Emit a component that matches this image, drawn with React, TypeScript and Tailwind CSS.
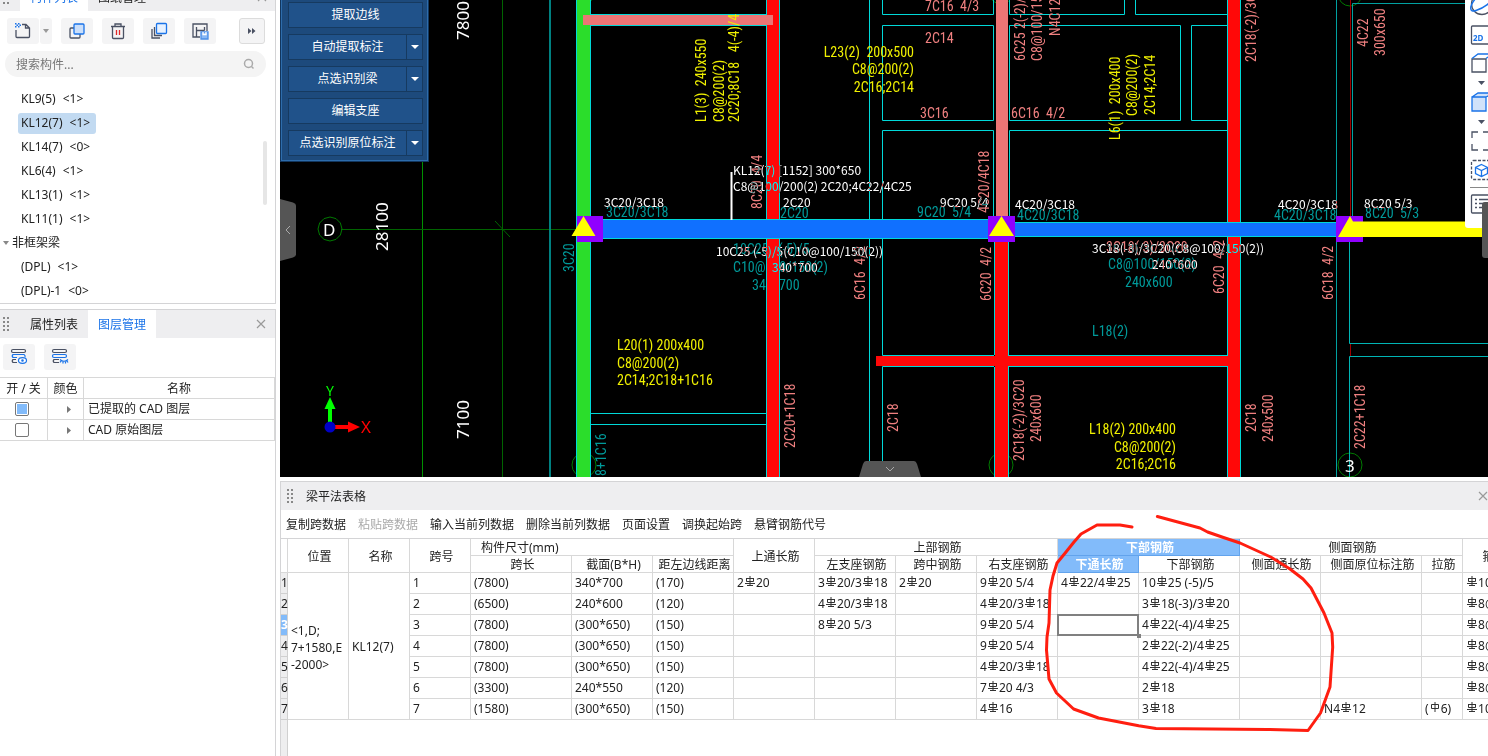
import { useState, type ReactNode } from "react"

type Note = [x: number, y: number, text: string, kind?: string];

const treeTop = ["KL9(5) <1>", "KL12(7) <1>", "KL14(7) <0>", "KL6(4) <1>", "KL13(1) <1>", "KL11(1) <1>"];
const treeBottom = ["(DPL) <1>", "(DPL)-1 <0>"];

const commands = [
  { name: "提取边线", menu: false },
  { name: "自动提取标注", menu: true },
  { name: "点选识别梁", menu: true },
  { name: "编辑支座", menu: false },
  { name: "点选识别原位标注", menu: true },
];

const tableTools = ["复制跨数据", "粘贴跨数据", "输入当前列数据", "删除当前列数据", "页面设置", "调换起始跨", "悬臂钢筋代号"];

// "#" is the HRB400 bar sign, "%" the plain bar sign
const spans = [
  ["1", "(7800)", "340*700", "(170)", "2#20", "3#20/3#18", "2#20", "9#20 5/4", "4#22/4#25", "10#25 (-5)/5", "", "", "", "#10@100/150"],
  ["2", "(6500)", "240*600", "(120)", "", "4#20/3#18", "", "4#20/3#18", "", "3#18(-3)/3#20", "", "", "", "#8@100/150"],
  ["3", "(7800)", "(300*650)", "(150)", "", "8#20 5/3", "", "9#20 5/4", "", "4#22(-4)/4#25", "", "", "", "#8@100/200"],
  ["4", "(7800)", "(300*650)", "(150)", "", "", "", "9#20 5/4", "", "2#22(-2)/4#25", "", "", "", "#8@100/200"],
  ["5", "(7800)", "(300*650)", "(150)", "", "", "", "4#20/3#18", "", "4#22(-4)/4#25", "", "", "", "#8@100/200"],
  ["6", "(3300)", "240*550", "(120)", "", "", "", "7#20 4/3", "", "2#18", "", "", "", "#8@100/200"],
  ["7", "(1580)", "(300*650)", "(150)", "", "", "", "4#16", "", "3#18", "", "N4#12", "(%6)", "#10@100/200"],
];

// x, baseline y, text, kind: "v" turned upright, "e" aligned to its end
const yellowNotes: Note[] = [
  [706, 122, "L1(3)  240x550", "v"],
  [724, 122, "C8@200(2)", "v"],
  [739, 122, "2C20;8C18   4(-4)/4", "v"],
  [914, 57, "L23(2)  200x500", "e"],
  [914, 74, "C8@200(2)", "e"],
  [914, 92, "2C16;2C14", "e"],
  [1120, 140, "L6(1)  200x400", "v"],
  [1137, 116, "C8@200(2)", "v"],
  [1155, 115, "2C14;2C14", "v"],
  [617, 350, "L20(1) 200x400"],
  [617, 368, "C8@200(2)"],
  [617, 385, "2C14;2C18+1C16"],
  [1176, 434, "L18(2) 200x400", "e"],
  [1176, 452, "C8@200(2)", "e"],
  [1176, 469, "2C16;2C16", "e"],
];

const salmonNotes: Note[] = [
  [925, 11, "7C16  4/3"],
  [925, 43, "2C14"],
  [920, 118, "3C16"],
  [1011, 118, "6C16  4/2"],
  [1025, 61, "6C25 2(-2)/4", "v"],
  [1042, 61, "C8@100/150(2)", "v"],
  [1060, 36, "N4C12", "v"],
  [1256, 62, "2C18(-2)/3C20", "v"],
  [1368, 47, "4C22", "v"],
  [1385, 56, "300x650", "v"],
  [762, 209, "8C20  4/4", "v"],
  [989, 213, "4C20/4C18", "v"],
  [1106, 252, "3C18(-3)/3C20"],
  [865, 300, "6C16  4/2", "v"],
  [991, 301, "6C20  4/2", "v"],
  [1224, 294, "6C20  4/2", "v"],
  [1333, 300, "6C18  4/2", "v"],
  [795, 448, "2C20+1C18", "v"],
  [898, 432, "2C18", "v"],
  [1024, 461, "2C18(-2)/3C20", "v"],
  [1041, 442, "240x600", "v"],
  [1256, 432, "2C18", "v"],
  [1273, 442, "240x500", "v"],
  [1365, 449, "2C22+1C18", "v"],
];

const tealNotes: Note[] = [
  [606, 217, "3C20/3C18"],
  [780, 218, "2C20"],
  [917, 217, "9C20  5/4"],
  [1017, 220, "4C20/3C18"],
  [1274, 220, "4C20/3C18"],
  [1365, 218, "8C20  5/3"],
  [733, 254, "10C25   (-5)/5"],
  [733, 272, "C10@100/150(2)"],
  [752, 290, "340x700"],
  [1108, 269, "C8@100/150(2)"],
  [1125, 287, "240x600"],
  [1092, 336, "L18(2)"],
  [574, 272, "3C20", "v"],
  [606, 476, "8+1C16", "v"],
];

const whiteNotes: Note[] = [
  [604, 207, "3C20/3C18"],
  [783, 207, "2C20"],
  [940, 207, "9C20 5/4"],
  [1015, 209, "4C20/3C18"],
  [1278, 209, "4C20/3C18"],
  [1364, 208, "8C20 5/3"],
  [733, 175, "KL12(7) [1152] 300*650"],
  [733, 191, "C8@100/200(2) 2C20;4C22/4C25"],
  [716, 256, "10C25 (-5)/5(C10@100/150(2))"],
  [772, 272, "340*700"],
  [1092, 253, "3C18(-3)/3C20(C8@100/150(2))"],
  [1152, 269, "240*600"],
];

function Notes({ items, className }: { items: Note[]; className: string }) {
  return (
    <g className={className}>
      {items.map(([x, y, text, kind], i) => (
        <text
          key={i}
          x={x}
          y={y}
          textAnchor={kind === "e" ? "end" : "start"}
          transform={kind === "v" ? `rotate(-90 ${x} ${y})` : undefined}
          className="whitespace-pre"
        >
          {text}
        </text>
      ))}
    </g>
  )
}

function Drawing() {
  return (
    <svg className="block h-full w-full" role="img" aria-label="梁平面图">
      <g transform="translate(-280 0)">
        {/* axis grid */}
        <g fill="none" stroke="#007a00">
          <path d="M422.5 0V477" stroke="#009000" />
          <path d="M502.5 0V477M341 229.5H576M495 221l15 16" stroke="#006400" />
          <path d="M342 229l-1.600 6-4.400 4.400-6 1.600-6-1.600-4.400-4.400-1.600-6 1.600-6 4.400-4.400 6-1.600 6 1.600 4.400 4.400z" />
          <circle cx="1350" cy="465" r="12" />
          <circle cx="584" cy="465" r="12" />
          <circle cx="1001" cy="465" r="12" />
          <circle cx="1350" cy="-6" r="12" />
          <circle cx="584" cy="-9" r="12" />
          <circle cx="1001" cy="-8" r="12" />
        </g>
        <path d="M550 0V477" stroke="#008080" strokeWidth="2" />

        <Notes items={tealNotes} className='fill-[#009a9a] font-["Liberation_Sans_Narrow","Roboto_Condensed","Liberation_Mono",monospace] text-[14px]' />

        {/* slab edges */}
        <path d="M1350.500 0V216M1350.500 344V356" stroke="#a00000" />
        <g fill="none" stroke="#00d8d8">
          <path d="M590 14.500H767M590 25.500H767M590.500 26V220M590.500 238V413.500H766.500M590.500 477V424.500H766.500" />
          <path d="M869.500 0V220M869.500 238V477M882.500 0V14.500H993.500V0M882.500 25.500H993.500V120.500H882.500zM882.500 220V130.500H993.500V220" />
          <path d="M1009.500 0V14.500H1124.500V0M1135.500 0V14.500H1228M1009.500 25.500H1180.500V120.500H1009.500zM1228 25.500H1191.500V120.500H1228M1009.500 223V130.500H1228" />
          <path d="M882.500 238V355.500H994M882.500 477V366.500H994M1008 355.500H1228M1008 366.500H1228" />
          <path d="M1336.500 0V477M1240.500 0V477M1352.500 216V3.500H1488" stroke="#00a0a0" />
          <path d="M1349.500 242V343.500H1488M1349.500 477V356.500H1488" stroke="#00b4b4" />
        </g>

        {/* beams */}
        <path d="M577 0h13v477h-13z" fill="#2bdd2b" />
        <path d="M576.500 0V477M590.500 0V477" stroke="#00d8d8" />
        <path d="M767 0h13v477h-13zM1228 0h12v477h-12zM995 242h13v235h-13zM876 356h352v10H876z" fill="#ff0808" />
        <path d="M766.500 0V477M779.500 0V477M1227.500 0V355M1227.500 367V477M1240.500 0V477M994.500 242V355M994.500 367V477M1008.500 242V355M1008.500 367V477" stroke="#00d8d8" />
        <path d="M583 15h190v10H583zM996 0h12v220h-12z" fill="#ec7575" />
        <path d="M583 220h418v18H583zM1001 223h349v13h-349z" fill="#1070ff" />
        <path d="M590 219.500H1001M590 238.500H1001M1001 222.500H1337M1001 236.500H1337" stroke="#00d8d8" />
        <path d="M577 216h26v26h-26zM988 216h27v26h-27zM1336 216h27v26h-27z" fill="#9000ff" />
        <path d="M583.500 216l12 20h-24zM1001.500 216l12.500 20h-25zM1350 216l3 5.500H1488V237H1338z" fill="#ff0" />

        <Notes items={salmonNotes} className='fill-[#f08080] font-["Liberation_Sans_Narrow","Roboto_Condensed","Liberation_Mono",monospace] text-[14px]' />
        <Notes items={yellowNotes} className='fill-[#f0f000] font-["Liberation_Sans_Narrow","Roboto_Condensed","Liberation_Mono",monospace] text-[14px]' />
        <path d="M731.500 172V220" stroke="#fff" strokeWidth="2" />
        <Notes items={whiteNotes} className='fill-white font-["Noto_Sans_CJK_SC",sans-serif] text-[12px] mix-blend-difference' />
        <Notes
          items={[
            [469, 40, "7800", "v"],
            [388, 251, "28100", "v"],
            [469, 439, "7100", "v"],
            [323, 236, "D"],
            [1345, 472, "3"],
          ]}
          className='fill-white font-["Noto_Sans",sans-serif] text-[17px]'
        />

        {/* ucs icon */}
        <path d="M330 427V408" stroke="#0f0" strokeWidth="4" />
        <path d="M330 397l5.500 12h-11z" fill="#0f0" />
        <path d="M330 427H349" stroke="#f00" strokeWidth="4" />
        <path d="M360 427l-12 5.500v-11z" fill="#f00" />
        <circle cx="330" cy="427" r="5.500" fill="#0000c8" />
        <text x="330" y="396" textAnchor="middle" className='fill-[#00ff00] font-["Noto_Sans",sans-serif] text-[14px]'>Y</text>
        <text x="366" y="433" textAnchor="middle" className='fill-[#ff0000] font-["Noto_Sans",sans-serif] text-[17px]'>X</text>
      </g>
    </svg>
  )
}

function Grip() {
  return (
    <svg className="shrink-0" width="8" height="16" fill="#888" aria-hidden="true">
      <path d="M1 1h2v2H1zM5 1h2v2H5zM1 5h2v2H1zM5 5h2v2H5zM1 9h2v2H1zM5 9h2v2H5zM1 13h2v2H1zM5 13h2v2H5z" />
    </svg>
  )
}

function Cross() {
  return (
    <svg width="10" height="10" fill="none" stroke="#999" strokeWidth="1.200" aria-hidden="true">
      <path d="M1 1l8 8M9 1l-8 8" />
    </svg>
  )
}

function Rebar({ plain }: { plain?: boolean }) {
  return (
    <svg className="mx-px inline-block align-[1px]" width="10" height="10" fill="none" stroke="#333" role="img" aria-label="钢筋">
      {plain ? <path d="M1.500 2.500h7v4h-7zM5 0v10" /> : <path d="M1.500 2v3.500h7V2M1 2.500h8M5 0v10M0 7.500h10M2 9.500h6" />}
    </svg>
  )
}

function BarText({ text }: { text: string }) {
  return (
    <>
      {text.split(/([#%])/).map((part, i) =>
        part === "#" ? <Rebar key={i} /> : part === "%" ? <Rebar key={i} plain /> : part
      )}
    </>
  )
}

function IconButton({ label, children }: { label: string; children: ReactNode }) {
  return (
    <button type="button" aria-label={label} className="flex h-[26px] w-8 items-center justify-center rounded-[3px] bg-[#f4f4f5]">
      {children}
    </button>
  )
}

function ComponentList() {
  const [selected, setSelected] = useState("KL12(7) <1>");
  const [keyword, setKeyword] = useState("");

  const row = (name: string) => (
    <li key={name} className="flex h-6 items-center pl-[18px]">
      <button
        type="button"
        onClick={() => setSelected(name)}
        className={`flex h-[21px] items-center gap-[7px] rounded-[3px] pr-[6px] pl-[3px] ${selected === name ? "bg-[#c2daf1]" : ""}`}
      >
        {name.split(" ").map((part) => <span key={part}>{part}</span>)}
      </button>
    </li>
  );

  return (
    <section className="border-r border-b border-[#d4d4d6]">
      <div className="flex h-[11px] items-end overflow-hidden bg-[#eeeef0]">
        <div className="flex h-7 flex-1 items-center">
          <div className="flex w-5 pl-0.5"><Grip /></div>
          <button type="button" className="h-7 w-[68px] bg-white pt-0.5 text-[#1a73e8]">构件列表</button>
          <button type="button" className="h-7 w-[68px] pt-0.5">图纸管理</button>
          <button type="button" aria-label="关闭" className="mr-2 ml-auto"><Cross /></button>
        </div>
      </div>

      <div className="mt-[7px] flex pr-[10px] pl-[7px]">
        <div className="mr-[9px] flex gap-px">
          <IconButton label="新建">
            <svg width="18" height="18" fill="none" stroke="#4a5163" strokeWidth="1.300" aria-hidden="true">
              <path d="M2 8v6.500q0 1 1 1h11.500q1 0 1-1V6l-3.500-3.500H8M11.500 2.500V6h4" />
              <path d="M1 1h1.500v1.500H1zM4 1h1.500v1.500H4zM2.500 2.500H4V4H2.500zM5.500 2.500H7V4H5.500zM1 4h1.500v1.500H1zM4 4h1.500v1.500H4z" fill="#1a73e8" stroke="none" />
            </svg>
          </IconButton>
          <button type="button" aria-label="新建选项" className="flex h-[26px] w-3 items-center justify-center rounded-[3px] bg-[#f4f4f5]">
            <svg width="6" height="4" fill="#999" aria-hidden="true"><path d="M0 0h6L3 4z" /></svg>
          </button>
        </div>
        <div className="flex gap-[9px]">
          <IconButton label="复制">
            <svg width="18" height="18" fill="none" stroke="#4a5163" strokeWidth="1.300" aria-hidden="true">
              <rect x="2" y="6" width="10" height="10" rx="1" />
              <rect x="6" y="2" width="10" height="10" rx="1" fill="#cbdffa" stroke="#1a73e8" />
            </svg>
          </IconButton>
          <IconButton label="删除">
            <svg width="18" height="18" fill="none" stroke="#4a5163" strokeWidth="1.300" aria-hidden="true">
              <path d="M2 4.500h14M6 4V2h6v2M3.500 5v10.500q0 1 1 1h9q1 0 1-1V5" />
              <path d="M7.500 8v5M10.500 8v5" stroke="#e02828" />
            </svg>
          </IconButton>
          <IconButton label="层间复制">
            <svg width="18" height="18" fill="none" stroke="#4a5163" strokeWidth="1.300" aria-hidden="true">
              <path d="M4.500 5v8.500H12M2 7v9h8" />
              <rect x="6.500" y="1.500" width="10" height="10" rx="1" fill="#e6f1ff" stroke="#1a73e8" />
            </svg>
          </IconButton>
          <IconButton label="存档">
            <svg width="18" height="18" fill="none" stroke="#4a5163" strokeWidth="1.300" aria-hidden="true">
              <path d="M16 9V2H2v13h7M5.500 5v10M5.500 8.500h8M13.500 5v3.500" />
              <path d="M10 10h7v7h-7z" stroke="#4a8fe8" fill="#8ab9f5" />
              <path d="M12 10v2.500h3V10" stroke="#fff" />
            </svg>
          </IconButton>
        </div>
        <button type="button" aria-label="更多" className="ml-auto flex h-[26px] w-[26px] items-center justify-center rounded-[3px] border border-[#dcdcdc] bg-[#f4f4f5]">
          <svg width="8" height="6" fill="#4a5163" aria-hidden="true"><path d="M0 0l3.500 3L0 6zM4 0l3.500 3L4 6z" /></svg>
        </button>
      </div>

      <label className="mt-[7px] mr-[9px] ml-[5px] flex h-[26px] items-center rounded-full bg-[#f4f4f4] pr-[11px] pl-[11px]">
        <input
          type="text"
          aria-label="搜索构件"
          value={keyword}
          onChange={(e) => setKeyword(e.target.value)}
          placeholder="搜索构件..."
          className="min-w-0 flex-1 pt-0.5 outline-none placeholder:text-[#777]"
        />
        <svg width="12" height="12" fill="none" stroke="#aaa" strokeWidth="1.500" aria-hidden="true">
          <circle cx="5.500" cy="5.500" r="4" />
          <path d="M8.500 8.500l2 2" />
        </svg>
      </label>

      <div className="relative mt-[10px]">
        <ul>
          {treeTop.map(row)}
          <li className="flex h-6 items-center gap-[3px] pl-[3px]">
            <svg width="6" height="4" fill="#888" aria-hidden="true"><path d="M0 0h6L3 4z" /></svg>
            非框架梁
          </li>
          {treeBottom.map(row)}
        </ul>
        <div className="absolute top-[54px] right-2 h-16 w-1 rounded bg-[#e6e6e6]" />
      </div>
    </section>
  )
}

function LayerPanel() {
  const [on, setOn] = useState([true, false]);

  return (
    <section className="mt-[5px] flex-1 border-t border-r border-[#d4d4d6]">
      <div className="flex h-7 items-center bg-[#eeeef0]">
        <div className="flex w-5 pl-0.5"><Grip /></div>
        <button type="button" className="h-7 w-[68px] pt-0.5">属性列表</button>
        <button type="button" className="h-7 w-[68px] bg-white pt-0.5 text-[#1a73e8]">图层管理</button>
        <button type="button" aria-label="关闭" className="mr-[9px] ml-auto"><Cross /></button>
      </div>
      <div className="flex gap-[9px] py-[6px] pl-[3px]">
        <IconButton label="显示图层">
          <svg width="18" height="18" fill="none" stroke="#4a5163" strokeWidth="1.200" aria-hidden="true">
            <rect x="1.500" y="1.500" width="14" height="3" rx="1.500" />
            <path d="M7 14.500H3q-1.500-1.500 0-3h3" />
            <path d="M7 9.500H3q-1.500-1.500 0-3h11q1.500 1 1 2.500" stroke="#1a73e8" />
            <ellipse cx="12.500" cy="12.500" rx="4" ry="2.800" stroke="#1a73e8" fill="#fff" />
            <circle cx="12.500" cy="12.500" r="0.700" stroke="#1a73e8" />
          </svg>
        </IconButton>
        <IconButton label="隐藏图层">
          <svg width="18" height="18" fill="none" stroke="#4a5163" strokeWidth="1.200" aria-hidden="true">
            <rect x="1.500" y="1.500" width="14" height="3" rx="1.500" />
            <path d="M8 14.500H3q-1.500-1.500 0-3h5" />
            <rect x="1.500" y="6.500" width="14" height="3" rx="1.500" stroke="#1a73e8" />
            <path d="M9 11.500q4 3.500 8 0M10 13l-1 1.500M12 13.500V15.500M14.500 13.500V15.500M16 13l1 1.500" stroke="#1a73e8" />
          </svg>
        </IconButton>
      </div>
      <table className="mt-px w-full table-fixed border-separate border-spacing-0 border-t border-[#d8d8d8]">
        <colgroup>
          <col className="w-12" />
          <col className="w-9" />
          <col />
        </colgroup>
        <thead>
          <tr className="*:h-[21px] *:border-r *:border-b *:border-[#d8d8d8] *:px-0 *:pt-0.5 *:pb-0 *:font-normal">
            <th>开 / 关</th>
            <th>颜色</th>
            <th>名称</th>
          </tr>
        </thead>
        <tbody>
          {["已提取的 CAD 图层", "CAD 原始图层"].map((name, i) => (
            <tr key={name} className="*:h-[21px] *:border-r *:border-b *:border-[#d8d8d8] *:p-0">
              <td>
                <input
                  type="checkbox"
                  aria-label={name}
                  checked={on[i]}
                  onChange={() => setOn(on.map((v, k) => (k === i ? !v : v)))}
                  className="ml-[15px] block size-[14px] appearance-none rounded-[2px] border border-[#777] bg-clip-content p-px checked:bg-[#82bbfa]"
                />
              </td>
              <td>
                <svg className="ml-[19px]" width="5" height="7" fill="#777" aria-hidden="true"><path d="M0 0l4 3.500L0 7z" /></svg>
              </td>
              <td><span className="pl-1">{name}</span></td>
            </tr>
          ))}
        </tbody>
      </table>
    </section>
  )
}

function CommandPanel() {
  return (
    <div className="absolute top-0 left-0 w-[149px] border border-t-0 border-[#12365e] bg-[#1d4a7c]">
      <div className="flex flex-col gap-[6px] border border-t-0 border-[#2d6cab] pt-0.5 pr-1 pb-1 pl-[6px] text-white">
        {commands.map((c) => (
          <div key={c.name} className="flex h-[26px] border border-[#163a60] bg-[#20528a]">
            <button type="button" className="min-w-0 flex-1 whitespace-nowrap">{c.name}</button>
            {c.menu && (
              <button type="button" aria-label={`${c.name}选项`} className="flex w-4 items-center justify-center border-l border-[#163a60]">
                <svg width="8" height="4" fill="#fff" aria-hidden="true"><path d="M0 0h8L4 4z" /></svg>
              </button>
            )}
          </div>
        ))}
      </div>
    </div>
  )
}

function ViewTool({ label, className, children }: { label: string; className: string; children: ReactNode }) {
  return (
    <button type="button" aria-label={label} className={`block w-6 shrink-0 ${className}`}>
      <svg className="block h-full w-full" fill="none" stroke="#4a5163" strokeWidth="1.300" aria-hidden="true">{children}</svg>
    </button>
  )
}

function ViewBar() {
  return (
    <div className="absolute top-0 right-0 flex h-[228px] w-[23px] flex-col overflow-hidden rounded-bl-[3px] bg-white pl-[5px]">
      <ViewTool label="动态观察" className="h-[21px]">
        <circle cx="12" cy="4" r="10.500" />
        <path d="M6-2C-1 6-1 13 6 10.500 14 8 21 3 21-2" stroke="#1a73e8" strokeWidth="1.500" />
      </ViewTool>
      <ViewTool label="二维" className="h-[26px]">
        <rect x="1.500" y="5" width="22" height="18" rx="1" />
        <text x="3" y="20" stroke="none" className='fill-[#1a73e8] font-["Noto_Sans",sans-serif] text-[8px] font-bold'>2D</text>
      </ViewTool>
      <ViewTool label="三维" className="h-[31px]">
        <path d="M2 12h14v13H2z" />
        <path d="M2 11.500l6-4.500h16M16 11.500l6-4.500" stroke="#1a73e8" />
      </ViewTool>
      <ViewTool label="三维选项" className="h-[9px]">
        <path d="M8 3h7l-3.500 4z" fill="#4a5163" stroke="none" />
      </ViewTool>
      <ViewTool label="着色" className="h-[30px]">
        <path d="M2 10h14v14H2zM2 10l6-4h16l-8 4" fill="#d0e2fa" stroke="#1a73e8" />
      </ViewTool>
      <ViewTool label="着色选项" className="h-[9px]">
        <path d="M8 3h7l-3.500 4z" fill="#4a5163" stroke="none" />
      </ViewTool>
      <ViewTool label="框选" className="h-[30px]">
        <path d="M2 12V6h6M2 18v6h6M13 6h6M13 24h6" />
      </ViewTool>
      <ViewTool label="局部三维" className="h-[31px]">
        <rect x="1.500" y="4.500" width="22" height="19" rx="2" strokeDasharray="3 1.500" />
        <path d="M11.500 8.500l6 3v6l-6 3-6-3v-6zM5.500 11.500l6 3 6-3M11.500 14.500v6" stroke="#1a73e8" />
      </ViewTool>
      <div className="h-px shrink-0 bg-[#888]" />
      <ViewTool label="显示设置" className="h-[32px]">
        <rect x="1.500" y="7" width="22" height="18" rx="1" />
        <path d="M5 11.500h2M9 11.500h10M5 15.500h2M9 15.500h10M5 19.500h2M9 19.500h4" />
      </ViewTool>
    </div>
  )
}

function BeamTable() {
  const head = "h-[17px] border-r border-b border-[#d8d8d8] pt-0.5 pr-0 pb-0 pl-[3px] font-normal whitespace-nowrap leading-[14px]";
  const headOn = "h-[17px] border-r border-b border-[#62a3ec] bg-[#82bbfa] pt-0.5 pr-0 pb-0 pl-[3px] font-bold leading-[14px] text-white";
  const cell = "h-[21px] overflow-hidden border-r border-b border-[#d8d8d8] py-0 pr-0 pl-[3px] whitespace-nowrap leading-4";

  return (
    <section className="relative shrink-0 overflow-hidden pt-1">
      <div className="flex h-[29px] items-center border-t border-l border-[#d4d4d6] bg-[#eeeef0] pl-[5px]">
        <Grip />
        <h2 className="ml-3 pt-0.5">梁平法表格</h2>
        <button type="button" aria-label="关闭" className="ml-auto"><Cross /></button>
      </div>
      <div className="flex h-7 items-center gap-3 border-l border-[#d4d4d6] pt-0.5 pl-[5px]">
        {tableTools.map((name, i) => (
          <button key={name} type="button" disabled={i === 1} className="whitespace-nowrap disabled:text-[#aaa]">{name}</button>
        ))}
      </div>
      <div className="flex flex-col overflow-hidden border-t border-l border-[#d4d4d6]">
        <table className="w-[1243px] table-fixed border-separate border-spacing-0">
          <colgroup>
            <col className="w-[7px]" />
            <col className="w-[61px]" />
            <col className="w-[61px]" />
            <col className="w-[61px]" />
            <col className="w-[101px]" />
            <col className="w-[81px]" />
            <col className="w-[81px]" />
            <col className="w-[81px]" />
            <col className="w-[81px]" />
            <col className="w-[81px]" />
            <col className="w-[81px]" />
            <col className="w-[81px]" />
            <col className="w-[101px]" />
            <col className="w-[81px]" />
            <col className="w-[101px]" />
            <col className="w-[41px]" />
            <col className="w-[61px]" />
          </colgroup>
          <thead>
            <tr>
              <th rowSpan={2} className="border-r border-b border-[#d8d8d8] p-0" aria-label="行" />
              <th rowSpan={2} className={head}>位置</th>
              <th rowSpan={2} className={head}>名称</th>
              <th rowSpan={2} className={head}>跨号</th>
              <th colSpan={3} className={`${head} text-left`}><span className="pl-[7px]">构件尺寸(mm)</span></th>
              <th rowSpan={2} className={head}>上通长筋</th>
              <th colSpan={3} className={head}>上部钢筋</th>
              <th colSpan={2} className={headOn}>下部钢筋</th>
              <th colSpan={3} className={head}>侧面钢筋</th>
              <th rowSpan={2} className={head}>箍筋</th>
            </tr>
            <tr>
              <th className={head}>跨长</th>
              <th className={head}>截面(B*H)</th>
              <th className={head}>距左边线距离</th>
              <th className={head}>左支座钢筋</th>
              <th className={head}>跨中钢筋</th>
              <th className={head}>右支座钢筋</th>
              <th className={headOn}>下通长筋</th>
              <th className={head}>下部钢筋</th>
              <th className={head}>侧面通长筋</th>
              <th className={head}>侧面原位标注筋</th>
              <th className={head}>拉筋</th>
            </tr>
          </thead>
          <tbody>
            {spans.map((span, r) => (
              <tr key={span[0]}>
                <th
                  scope="row"
                  className={`h-[21px] border-r border-b border-[#d0d0d0] p-0 leading-4 ${r === 2 ? "bg-[#82bbfa] font-bold text-white" : "bg-[#eeeeef] font-normal"}`}
                >
                  {r + 1}
                </th>
                {r === 0 && (
                  <>
                    <td rowSpan={7} className="border-r border-b border-[#d8d8d8] pt-0.5 pr-0 pb-0 pl-[3px] leading-[17px] whitespace-nowrap">
                      &lt;1,D;<br />7+1580,E<br />-2000&gt;
                    </td>
                    <td rowSpan={7} className="border-r border-b border-[#d8d8d8] pt-0.5 pr-0 pb-0 pl-[3px]">KL12(7)</td>
                  </>
                )}
                {span.map((text, c) =>
                  r === 2 && c === 8 ? (
                    <td key={c} className="relative h-[21px] border-r border-b border-[#d8d8d8] p-0">
                      <div className="absolute -top-px -right-px -bottom-px -left-px border-2 border-[#808080]">
                        <div className="absolute -right-1 -bottom-1 size-1 bg-[#808080]" />
                      </div>
                    </td>
                  ) : (
                    <td key={c} className={cell}><BarText text={text} /></td>
                  )
                )}
              </tr>
            ))}
          </tbody>
        </table>
        <div className="h-9 w-[7px] border-r border-[#d0d0d0] bg-[#eeeeef]" />
      </div>

      {/* hand-drawn mark round the lower bar columns */}
      <svg className="pointer-events-none absolute top-0 left-0 h-full w-full" fill="none" stroke="#ff1e10" strokeWidth="3" strokeLinecap="round" strokeLinejoin="round" aria-hidden="true">
        <g transform="translate(-280 -477)">
          <path d="M1132 527L1120 525 1097 525 1081 534 1074 542 1066 552 1057 563 1053 576 1050 590 1049 623 1047 637 1046.500 650 1049 679 1056.500 693 1073.600 709 1098.500 718 1138.700 725.700 1156 728.500 1267 729.500 1308 730.500 1320.500 713 1330 687 1332.700 647 1332 633 1324 613 1311 588 1303 579 1290 569 1270.700 557 1240 543 1222 537 1207.600 532 1200 528 1157.400 516.500" />
        </g>
      </svg>
    </section>
  )
}

export default function App() {
  return (
    <div className='flex h-screen min-h-[600px] overflow-hidden bg-white font-["Noto_Sans","Noto_Sans_CJK_SC",sans-serif] text-[12px] leading-4 text-[#222]'>
      <aside className="mr-1 flex w-[276px] shrink-0 flex-col">
        <ComponentList />
        <LayerPanel />
      </aside>
      <main className="flex min-w-0 flex-1 flex-col">
        <div className="relative min-h-0 flex-1 overflow-hidden bg-black">
          <Drawing />
          <CommandPanel />
          <ViewBar />
          <button type="button" aria-label="收起左侧" className="absolute top-[199px] left-0">
            <svg className="block" width="16" height="62" fill="#555" aria-hidden="true">
              <path d="M0 0l13 3.500q3 1 3 3v49q0 2-3 3L0 62z" />
              <path d="M10 27l-4 4 4 4" fill="none" stroke="#aaa" />
            </svg>
          </button>
          <button type="button" aria-label="收起下方" className="absolute bottom-0 left-[579px]">
            <svg className="block" width="62" height="16" fill="#555" aria-hidden="true">
              <path d="M0 16L4 3q1-3 3-3h48q2 0 3 3l4 13z" />
              <path d="M27 6l4 4 4-4" fill="none" stroke="#aaa" />
            </svg>
          </button>
          <button type="button" aria-label="展开右侧" className="absolute top-[202px] right-0 h-14 w-[6px] rounded-l-[3px] bg-[#555]" />
        </div>
        <BeamTable />
      </main>
    </div>
  )
}
